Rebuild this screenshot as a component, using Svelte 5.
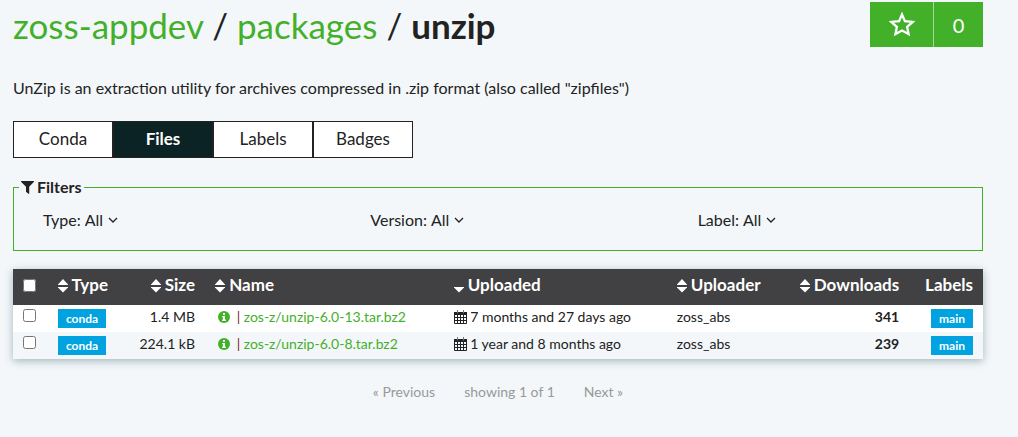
<script lang="ts">
  type PackageFile = {
    type: string;
    size: string;
    name: string;
    uploaded: string;
    uploader: string;
    downloads: number;
    label: string;
  };

  const tabs = ['Conda', 'Files', 'Labels', 'Badges'];
  const filters = ['Type', 'Version', 'Label'];

  const columns = [
    { key: 'type', title: 'Type', sort: 'both' },
    { key: 'size', title: 'Size', sort: 'both' },
    { key: 'name', title: 'Name', sort: 'both' },
    { key: 'uploaded', title: 'Uploaded', sort: 'down' },
    { key: 'uploader', title: 'Uploader', sort: 'both' },
    { key: 'downloads', title: 'Downloads', sort: 'both' },
    { key: 'labels', title: 'Labels', sort: '' }
  ];

  const files: PackageFile[] = [
    {
      type: 'conda',
      size: '1.4 MB',
      name: 'zos-z/unzip-6.0-13.tar.bz2',
      uploaded: '7 months and 27 days ago',
      uploader: 'zoss_abs',
      downloads: 341,
      label: 'main'
    },
    {
      type: 'conda',
      size: '224.1 kB',
      name: 'zos-z/unzip-6.0-8.tar.bz2',
      uploaded: '1 year and 8 months ago',
      uploader: 'zoss_abs',
      downloads: 239,
      label: 'main'
    }
  ];

  let activeTab = $state('Files');
  let checked = $state(files.map(() => false));

  function toggleAll(event: Event) {
    const on = (event.currentTarget as HTMLInputElement).checked;
    checked = files.map(() => on);
  }
</script>

<main>
  <header>
    <h1>
      <a href="#owner">zoss-appdev</a> / <a href="#packages">packages</a> / <strong>unzip</strong>
    </h1>
    <div class="stars">
      <button class="star" aria-label="Star this package">
        <svg width="26" height="25" viewBox="0 0 26 25">
          <path d="M13 2.400l2.900 6.700 7.800.8-5.600 4.900 1.500 7.300-6.600-3.500-6.600 3.500 1.500-7.300L2.300 9.900l7.800-.8z" />
        </svg>
      </button>
      <a class="star-count" href="#stargazers">0</a>
    </div>
  </header>

  <p class="summary">UnZip is an extraction utility for archives compressed in .zip format (also called "zipfiles")</p>

  <nav>
    {#each tabs as tab}
      <a href="#{tab.toLowerCase()}" class:active={activeTab === tab} onclick={() => (activeTab = tab)}>{tab}</a>
    {/each}
  </nav>

  <fieldset>
    <legend>
      <svg width="13" height="13" viewBox="0 0 13 13">
        <path d="M.3 0h12.400c.4 0 .4.5.1.9L8.200 5.700V12.500c0 .4-.4.6-.8.3L5 10.800V5.700L.2.900C-.1.500 0 0 .3 0z" />
      </svg>
      Filters
    </legend>
    <div class="filters">
      {#each filters as filter}
        <div class="filter">
          <label for="filter-{filter}">{filter}:</label>
          <select id="filter-{filter}">
            <option>All</option>
          </select>
          <svg width="10" height="6" viewBox="0 0 10 6">
            <path d="M1 1l4 4 4-4" />
          </svg>
        </div>
      {/each}
    </div>
  </fieldset>

  <table>
    <thead>
      <tr>
        <th class="check">
          <input type="checkbox" aria-label="Select all files" onchange={toggleAll} />
        </th>
        {#each columns as column}
          <th class={column.key}>
            {#if column.sort}
              <svg class="sort" width="10" height="14" viewBox="0 0 10 14">
                {#if column.sort === 'both'}
                  <path d="M5 0l5 5.500V6H0v-.5z" />
                {/if}
                <path d="M5 13.500L0 8.500V8h10v.5z" />
              </svg>
            {/if}
            {column.title}
          </th>
        {/each}
      </tr>
    </thead>
    <tbody>
      {#each files as file, i}
        <tr>
          <td class="check">
            <input type="checkbox" aria-label="Select {file.name}" bind:checked={checked[i]} />
          </td>
          <td class="type"><a class="tag" href="#type">{file.type}</a></td>
          <td class="size">{file.size}</td>
          <td class="name">
            <button class="info" aria-label="File details">
              <svg width="12" height="12" viewBox="0 0 12 12">
                <circle cx="6" cy="6" r="6" />
                <path d="M5 2h2v1.700H5zM4.200 5H7v3.500h.8V10H4.200V8.500H5V6.300h-.8z" />
              </svg>
            </button>
            <span class="divider">|</span>
            <a href="#download">{file.name}</a>
          </td>
          <td class="uploaded">
            <svg class="calendar" width="13" height="14" viewBox="0 0 13 14">
              <path class="page" d="M.5 3.500h12v10H.5zM.5 7.500h12M.5 10.500h12M3.500 5v8.500M6.500 5v8.500M9.500 5v8.500" />
              <path d="M0 2h13v3H0z" />
              <path class="ring" d="M3.500 0v3.500M9.500 0v3.500" />
            </svg>
            {file.uploaded}
          </td>
          <td class="uploader">{file.uploader}</td>
          <td class="downloads">{file.downloads}</td>
          <td class="labels"><a class="tag" href="#label">{file.label}</a></td>
        </tr>
      {/each}
    </tbody>
  </table>

  <div class="pagination">
    <button disabled>« Previous</button>
    <span>showing 1 of 1</span>
    <button disabled>Next »</button>
  </div>
</main>

<style>
  :global(body) {
    background: #f3f7fa;
  }

  main {
    --green: #43b02a;
    --dark: #222;
    padding: 2px 35px 0 13px;
    color: var(--dark);
    font-family: Lato, "Open Sans", sans-serif;
    font-size: 16px;
    line-height: 24px;
  }

  a {
    color: var(--green);
    text-decoration: none;
  }

  button {
    padding: 0;
    border: 0;
    background: none;
    color: inherit;
    font: inherit;
  }

  header {
    display: flex;
    justify-content: space-between;
  }

  h1 {
    margin: 0;
    font-size: 35px;
    font-weight: 400;
    line-height: 46px;
  }

  h1 strong {
    font-weight: 700;
  }

  .stars {
    display: flex;
    height: 45px;
  }

  .star,
  .star-count {
    display: flex;
    align-items: center;
    justify-content: center;
    background: var(--green);
    color: #fff;
    font-size: 20px;
  }

  .star {
    width: 63px;
  }

  .star svg {
    fill: none;
    stroke: #fff;
    stroke-width: 2.3;
  }

  .star-count {
    width: 49px;
    border-left: 1px solid #a5d99a;
  }

  .summary {
    margin: 28px 0 21px;
  }

  nav {
    display: flex;
    font-size: 17px;
  }

  nav a {
    box-sizing: border-box;
    width: 100px;
    padding: 5px 0 6px;
    border: 1px solid var(--dark);
    background: #fff;
    color: var(--dark);
    text-align: center;
  }

  nav a.active {
    background: #0c2326;
    color: #fff;
    font-weight: 700;
  }

  fieldset {
    min-width: 0;
    margin: 17px 0 18px;
    padding: 9px 0 18px;
    border: 1px solid var(--green);
  }

  legend {
    display: flex;
    align-items: center;
    gap: 3px;
    margin-left: 5px;
    padding: 0 2px;
    font-weight: 700;
  }

  legend svg {
    fill: var(--dark);
  }

  .filters {
    display: grid;
    grid-template-columns: repeat(3, 1fr);
    gap: 43px;
    padding-left: 29px;
  }

  .filter {
    display: flex;
    align-items: center;
    gap: 4px;
  }

  select {
    appearance: none;
    padding: 0;
    border: 0;
    background: none;
    color: inherit;
    font: inherit;
  }

  .filter svg {
    fill: none;
    stroke: var(--dark);
    stroke-width: 1.3;
  }

  table {
    width: 100%;
    table-layout: fixed;
    border-collapse: collapse;
    box-shadow: 0 2px 8px rgba(12, 60, 65, 0.35);
    font-size: 14px;
  }

  th,
  td {
    padding: 0 10px;
    text-align: left;
    white-space: nowrap;
  }

  th {
    height: 36px;
    padding-bottom: 4px;
    box-sizing: border-box;
    background: #414042;
    color: #fff;
    font-size: 17px;
  }

  td {
    height: 27px;
    box-sizing: border-box;
    padding-bottom: 3px;
  }

  tbody tr {
    background: #fff;
  }

  tbody tr:nth-child(even) {
    background: #f3f7fa;
  }

  th.check {
    width: 3.6%;
  }

  th.type {
    width: 7.7%;
  }

  th.size {
    width: 8.5%;
  }

  th.name {
    width: 24.6%;
  }

  th.uploaded {
    width: 23%;
  }

  th.uploader {
    width: 11%;
  }

  th.downloads {
    width: 14%;
  }

  th.labels {
    width: 7.6%;
  }

  .size,
  .downloads,
  .labels {
    text-align: right;
  }

  td.downloads {
    font-weight: 700;
  }

  input {
    display: block;
    width: 13px;
    height: 13px;
    margin: 0;
  }

  td input {
    margin-bottom: 3px;
  }

  .sort {
    vertical-align: -2px;
    fill: #fff;
  }

  td.type,
  td.labels {
    padding-bottom: 0;
  }

  .tag {
    display: block;
    width: fit-content;
    padding: 0 8px;
    background: #00a3e0;
    color: #fff;
    font-size: 12px;
    font-weight: 700;
    line-height: 19px;
  }

  .labels .tag {
    margin-left: auto;
  }

  .info {
    margin-left: 3px;
    vertical-align: -1px;
  }

  .info svg {
    display: block;
    fill: var(--green);
  }

  .info path {
    fill: #fff;
  }

  .divider {
    margin-left: 3px;
    color: #7a1f1f;
  }

  .calendar {
    vertical-align: -2px;
    fill: var(--dark);
  }

  .calendar .page {
    fill: none;
    stroke: var(--dark);
  }

  .calendar .ring {
    stroke: #777;
  }

  .pagination {
    display: flex;
    justify-content: center;
    gap: 29px;
    margin-top: 21px;
    color: #999;
    font-size: 14px;
  }
</style>
